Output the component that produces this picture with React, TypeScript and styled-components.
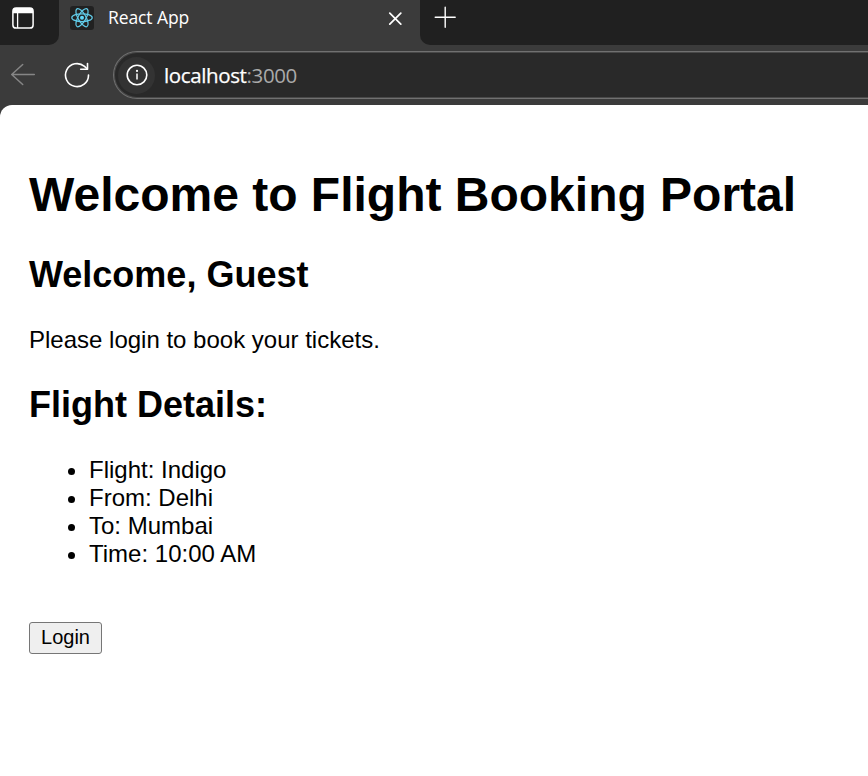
import React from "react";
import styled, { createGlobalStyle } from "styled-components";

const GlobalStyle = createGlobalStyle`
  * { box-sizing: border-box; }
  body { margin: 0; background: #3b3b3b; overflow: hidden; }
`;

const Browser = styled.div`
  display: flex;
  flex-direction: column;
  width: 100%;
  height: 100vh;
  overflow: hidden;
  background: #3b3b3b;
  color: #fff;
  font-family: "Segoe UI", "Open Sans", "Noto Sans", sans-serif;
  svg { display: block; flex: none; }
`;

const TabStrip = styled.div`
  display: flex;
  height: 45px;
  flex: none;
`;

const StripStart = styled.div`
  width: 59px;
  padding: 7px 0 0 12px;
  background: #202020;
  border-bottom-right-radius: 10px;
`;

const Tab = styled.div`
  display: flex;
  align-items: center;
  width: 361px;
  height: 36px;
  padding: 0 18px 0 11px;
`;

const TabTitle = styled.span`
  flex: 1;
  padding: 0 0 2px 14px;
  font-size: 17.5px;
  line-height: 24px;
  letter-spacing: -0.1px;
`;

const StripEnd = styled.div`
  flex: 1;
  padding: 6px 0 0 14px;
  background: #202020;
  border-bottom-left-radius: 10px;
`;

const Toolbar = styled.div`
  display: flex;
  align-items: center;
  flex: none;
  height: 60px;
  padding-left: 10px;
`;

const BackSlot = styled.span`
  width: 54px;
`;

const ReloadSlot = styled.span`
  width: 49px;
`;

const AddressBar = styled.div`
  display: flex;
  align-items: center;
  flex: 1;
  height: 48px;
  margin-right: -4px;
  padding-left: 4px;
  border: 1px solid #707070;
  border-right: 0;
  border-radius: 24px 0 0 24px;
  background: #292929;
  box-shadow: inset 0 0 0 1px #484848;
`;

const InfoBadge = styled.span`
  display: grid;
  place-items: center;
  width: 37px;
  height: 37px;
  border-radius: 50%;
  background: #333;
`;

const Address = styled.span`
  padding: 0 0 0 9px;
  font-size: 20.5px;
  line-height: 28px;
  letter-spacing: -0.37px;
`;

const Host = styled.span`
  -webkit-text-stroke: 0.25px #fff;
`;

const Port = styled.span`
  color: #aaa;
`;

const Page = styled.main`
  flex: 1;
  padding: 63px 29px 0;
  border-top-left-radius: 12px;
  background: #fff;
  color: #000;
  font: 24px/28px "Liberation Sans", Arial, sans-serif;
`;

const Title = styled.h1`
  margin: 0 0 32px;
  font-size: 48px;
  line-height: 54px;
  white-space: nowrap;
`;

const Heading = styled.h2`
  margin: 0 0 31px;
  font-size: 36px;
  line-height: 41px;
`;

const Message = styled.p`
  margin: 0 0 30px;
`;

const Details = styled.ul`
  margin: 0 0 54px;
  padding-left: 60px;
`;

const LoginButton = styled.button`
  display: block;
  width: 73px;
  height: 32px;
  padding: 0 0 2px;
  border: 1px solid #767676;
  border-radius: 3px;
  background: #efefef;
  color: #000;
  font: 20px/24px "Liberation Sans", Arial, sans-serif;
`;

const flight = [
  ["Flight", "Indigo"],
  ["From", "Delhi"],
  ["To", "Mumbai"],
  ["Time", "10:00 AM"],
];

const WorkspaceIcon = () => (
  <svg width="22" height="22" viewBox="0 0 22 22" fill="none" stroke="#fff" strokeWidth="1.5">
    <rect x="0.9" y="1.1" width="20.2" height="20" rx="3.2" />
    <path d="M1 4a3 3 0 0 1 3-3h14a3 3 0 0 1 3 3v2.2H1z" fill="#fff" stroke="none" />
    <path d="M5.6 6v15" strokeWidth="1.3" />
  </svg>
);

const ReactIcon = () => (
  <svg width="24" height="24" viewBox="0 0 24 24">
    <rect width="24" height="24" rx="3" fill="#212121" />
    <g fill="none" stroke="#61cbe8" strokeWidth="1.25">
      <ellipse cx="12" cy="11.7" rx="10.2" ry="3.9" />
      <ellipse cx="12" cy="11.7" rx="10.2" ry="3.9" transform="rotate(60 12 11.7)" />
      <ellipse cx="12" cy="11.7" rx="10.2" ry="3.9" transform="rotate(120 12 11.7)" />
    </g>
    <circle cx="12" cy="11.7" r="2" fill="#61dafb" />
  </svg>
);

const CloseIcon = () => (
  <svg width="14" height="14" viewBox="0 0 14 14" stroke="#fff" strokeWidth="1.7" strokeLinecap="round">
    <path d="M1.8 2.2l11 11M12.8 2.2l-11 11" />
  </svg>
);

const PlusIcon = () => (
  <svg width="22" height="22" viewBox="0 0 22 22" stroke="#fff" strokeWidth="1.4" strokeLinecap="round">
    <path d="M11.2 1.3v20M1.2 11.2h20" />
  </svg>
);

const BackIcon = () => (
  <svg width="26" height="24" viewBox="0 0 26 24" fill="none" stroke="#868686" strokeWidth="1.5" strokeLinecap="round" strokeLinejoin="round">
    <path d="M24.3 11.5H1.7M12.7 1.5l-11 10 11 10" />
  </svg>
);

const ReloadIcon = () => (
  <svg width="26" height="26" viewBox="0 0 26 26" fill="none" stroke="#fff" strokeWidth="1.6" strokeLinecap="round" strokeLinejoin="round">
    <path d="M24.5 13A11.5 11.5 0 1 1 20.5 4.4L23.3 7" />
    <path d="M23.5 1.5V7.3h-6.8" />
  </svg>
);

const InfoIcon = () => (
  <svg width="22" height="22" viewBox="0 0 22 22" fill="none" stroke="#fff" strokeWidth="1.6">
    <circle cx="11" cy="11" r="9.8" />
    <path d="M11 9.6v6" strokeWidth="1.5" />
    <circle cx="11" cy="6.9" r="1.1" fill="#fff" stroke="none" />
  </svg>
);

export default function App() {
  return (
    <>
      <GlobalStyle />
      <Browser>
        <TabStrip>
          <StripStart><WorkspaceIcon /></StripStart>
          <Tab>
            <ReactIcon />
            <TabTitle>React App</TabTitle>
            <CloseIcon />
          </Tab>
          <StripEnd><PlusIcon /></StripEnd>
        </TabStrip>
        <Toolbar>
          <BackSlot><BackIcon /></BackSlot>
          <ReloadSlot><ReloadIcon /></ReloadSlot>
          <AddressBar>
            <InfoBadge><InfoIcon /></InfoBadge>
            <Address><Host>localhost</Host><Port>:3000</Port></Address>
          </AddressBar>
        </Toolbar>
        <Page>
          <Title>Welcome to Flight Booking Portal</Title>
          <Heading>Welcome, Guest</Heading>
          <Message>Please login to book your tickets.</Message>
          <Heading>Flight Details:</Heading>
          <Details>
            {flight.map(([label, value]) => (
              <li key={label}>{label}: {value}</li>
            ))}
          </Details>
          <LoginButton>Login</LoginButton>
        </Page>
      </Browser>
    </>
  );
}
